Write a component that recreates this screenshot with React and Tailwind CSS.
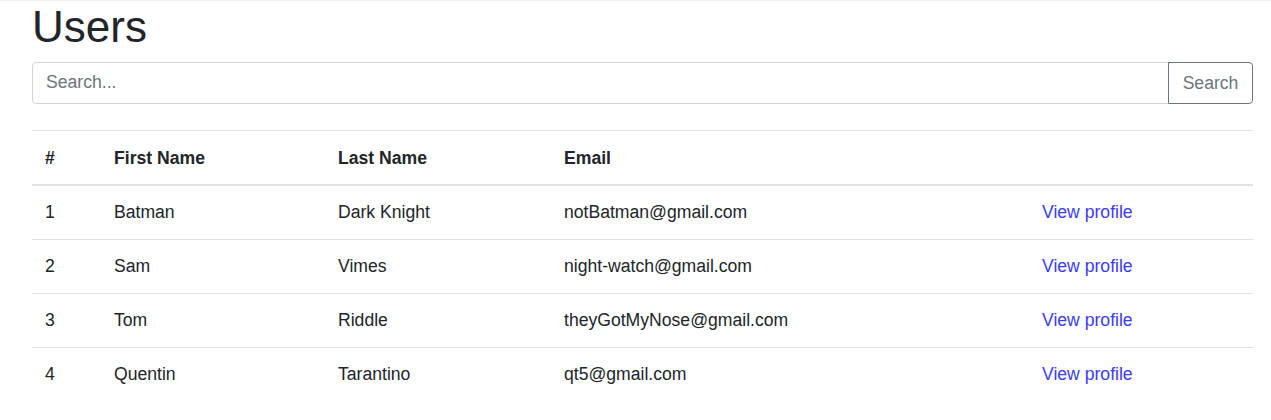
import React, { useState } from 'react';

const users = [
  { id: 1, first: 'Batman', last: 'Dark Knight', email: 'notBatman@gmail.com' },
  { id: 2, first: 'Sam', last: 'Vimes', email: 'night-watch@gmail.com' },
  { id: 3, first: 'Tom', last: 'Riddle', email: 'theyGotMyNose@gmail.com' },
  { id: 4, first: 'Quentin', last: 'Tarantino', email: 'qt5@gmail.com' },
];

function App() {
  const [query, setQuery] = useState('');

  return (
    <div
      className="min-h-[420px] bg-white border-t border-[#f1f2f4] text-[#212529] text-[17.6px]"
      style={{ fontFamily: '"Liberation Sans", Arial, sans-serif' }}
    >
      <div className="pl-8 pr-[18px]">
        <h1 className="text-[44px] leading-[1.2] font-normal mb-[8px]">Users</h1>

        {/* Search bar */}
        <div className="flex">
          <input
            type="text"
            value={query}
            onChange={e => setQuery(e.target.value)}
            placeholder="Search..."
            className="flex-1 h-[42px] px-[13px] border border-[#ced4da] rounded-l-[4px] text-[17.6px] placeholder:text-[#6c757d] outline-none"
          />
          <button
            type="button"
            className="w-[85px] h-[42px] border border-[#6c757d] rounded-r-[4px] text-[#6c757d] -ml-px"
          >
            Search
          </button>
        </div>

        {/* Users table */}
        <table className="w-full mt-[26px] border-collapse text-left">
          <thead>
            <tr className="border-t border-[#dee2e6] border-b-2">
              <th className="w-[69px] px-[13px] pt-[2px] h-[55px] font-bold">#</th>
              <th className="w-[224px] px-[13px] pt-[2px] font-bold">First Name</th>
              <th className="w-[226px] px-[13px] pt-[2px] font-bold">Last Name</th>
              <th className="w-[478px] px-[13px] pt-[2px] font-bold">Email</th>
              <th className="px-[13px]"></th>
            </tr>
          </thead>
          <tbody>
            {users.map(user => (
              <tr key={user.id} className="border-t border-[#dee2e6] first:border-t-0">
                <td className="px-[13px] h-[54px]">{user.id}</td>
                <td className="px-[13px]">{user.first}</td>
                <td className="px-[13px]">{user.last}</td>
                <td className="px-[13px]">{user.email}</td>
                <td className="px-[13px]">
                  <a href="#" className="text-[#3b3bf8]">View profile</a>
                </td>
              </tr>
            ))}
          </tbody>
        </table>
      </div>
    </div>
  );
}

export default App;
